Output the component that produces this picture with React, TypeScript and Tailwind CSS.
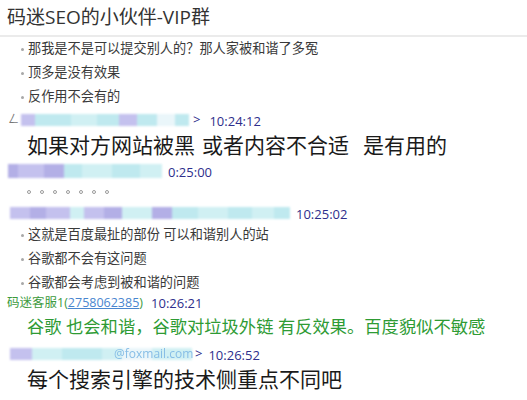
const font = {
  fontFamily: '"Open Sans", "Noto Sans CJK SC", sans-serif',
};

type Block = [number, string];

// redacted sender names, drawn as soft colour strips
function Smudge({ blocks, h = 12 }: { blocks: Block[]; h?: number }) {
  return (
    <div className="flex items-center blur-[1.2px]" style={{ height: h }}>
      {blocks.map(([w, c], i) => (
        <div key={i} className="h-full" style={{ width: w, background: c }} />
      ))}
    </div>
  );
}

function Bullet({ children }: { children: React.ReactNode }) {
  return (
    <div className="flex items-center h-[24px] pl-[21px] text-[13.2px] text-[#3a3a3a]">
      <span className="w-[3px] h-[3px] rounded-full bg-[#a8a8a8] mr-[4px]" />
      <span>{children}</span>
    </div>
  );
}

function Time({ children }: { children: React.ReactNode }) {
  return <span className="text-[13px] text-[#2e2e8c]">{children}</span>;
}

const L = "#c4c1ee";
const L2 = "#b3afe6";
const C = "#bfe9ef";
const C2 = "#d0f0f3";
const W = "#eaf6fa";

export default function App() {
  return (
    <div
      className="w-[527px] h-[400px] bg-white overflow-hidden flex flex-col"
      style={font}
    >
      <div className="h-[37px] shrink-0 flex items-center pl-[7px] text-[19px] text-[#333] border-b-2 border-[#ebebeb]">
        码迷SEO的小伙伴-VIP群
      </div>

      <Bullet>那我是不是可以提交别人的？那人家被和谐了多冤</Bullet>
      <Bullet>顶多是没有效果</Bullet>
      <Bullet>反作用不会有的</Bullet>

      <div className="h-[21px] flex items-center pl-[8px] gap-[3px]">
        <span className="text-[11px] text-[#777] w-[10px]">ㄥ</span>
        <Smudge
          blocks={[
            [14, L],
            [36, C],
            [26, C2],
            [22, C],
            [18, L],
            [20, C],
            [18, W],
            [14, C],
          ]}
        />
        <span className="text-[13px] text-[#2e2e8c] ml-[1px]">&gt;</span>
        <span className="ml-[6px]">
          <Time>10:24:12</Time>
        </span>
      </div>

      <div className="h-[30px] flex items-center pl-[27px] text-[21px] text-[#1a1a1a] leading-none">
        <span>如果对方网站被黑</span>
        <span className="inline-block w-[7px]" />
        <span>或者内容不合适</span>
        <span className="inline-block w-[14px]" />
        <span>是有用的</span>
      </div>

      <div className="h-[22px] flex items-center pl-[8px]">
        <Smudge
          h={14}
          blocks={[
            [10, L2],
            [26, L],
            [20, L2],
            [18, C],
            [30, C2],
            [28, C],
            [22, C2],
          ]}
        />
        <span className="ml-[6px]">
          <Time>0:25:00</Time>
        </span>
      </div>

      <div className="h-[20px] flex items-center pl-[27px]">
        {[0, 1, 2, 3, 4, 5, 6].map((i) => (
          <span key={i} className="w-[13px] flex">
            <span className="w-[4px] h-[4px] rounded-full border border-[#9a9a9a]" />
          </span>
        ))}
      </div>

      <div className="h-[21px] flex items-center pl-[10px]">
        <Smudge
          blocks={[
            [20, L],
            [16, L2],
            [24, L],
            [14, C2],
            [20, L],
            [18, L2],
            [30, C2],
            [20, L2],
            [26, C],
            [30, C2],
            [24, C],
            [22, C2],
            [16, C],
          ]}
        />
        <span className="ml-[6px]">
          <Time>10:25:02</Time>
        </span>
      </div>

      <Bullet>这就是百度最扯的部份 可以和谐别人的站</Bullet>
      <Bullet>谷歌都不会有这问题</Bullet>
      <Bullet>谷歌都会考虑到被和谐的问题</Bullet>

      <div className="h-[17px] flex items-center pl-[7px] text-[12.5px]">
        <span className="text-[#3d9a3d]">码迷客服1(</span>
        <span className="text-[#4a86cf] underline">2758062385</span>
        <span className="text-[#3d9a3d]">)</span>
        <span className="ml-[8px]">
          <Time>10:26:21</Time>
        </span>
      </div>

      <div className="h-[30px] flex items-center pl-[27px] text-[17.3px] text-[#2e9b34] whitespace-pre">
        谷歌 也会和谐，谷歌对垃圾外链 有反效果。百度貌似不敏感
      </div>

      <div className="h-[24px] flex items-center pl-[10px]">
        <div className="relative flex items-center">
          <Smudge
            blocks={[
              [22, L],
              [30, C2],
              [40, C],
              [20, C2],
              [30, W],
              [40, C2],
            ]}
          />
          <span className="absolute left-[104px] text-[12px] text-[#86bde6] blur-[0.6px]">
            @foxmail.com
          </span>
        </div>
        <span className="text-[13px] text-[#2e2e8c] ml-[3px]">&gt;</span>
        <span className="ml-[6px]">
          <Time>10:26:52</Time>
        </span>
      </div>

      <div className="h-[28px] flex items-center pl-[27px] text-[21px] text-[#1a1a1a]">
        每个搜索引擎的技术侧重点不同吧
      </div>
    </div>
  );
}
